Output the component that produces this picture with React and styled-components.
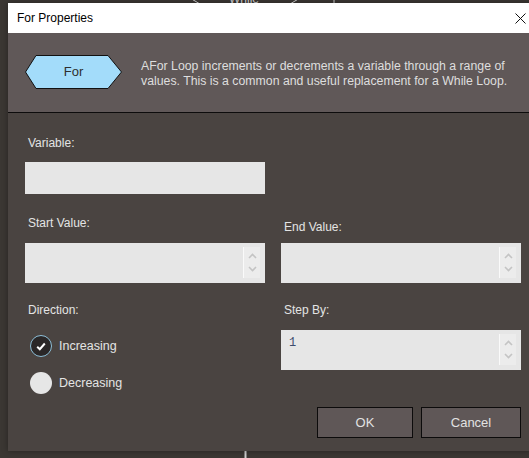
// IMPORTS
import React, { useState } from "react";
import styled, { createGlobalStyle } from "styled-components";

// GLOBAL
const GlobalStyle = createGlobalStyle`
  html, body {
    margin: 0;
    padding: 0;
    background: #3b3733;
    overflow: hidden;
  }
  * {
    box-sizing: border-box;
  }
`;

// STYLED COMPONENTS
const Canvas = styled.div`
  position: relative;
  width: 529px;
  height: 458px;
  overflow: hidden;
  background: #3b3733;
  font-family: "Liberation Sans", Arial, sans-serif;
`;

const FlowDrawing = styled.svg`
  position: absolute;
  left: 0;
  top: 0;
`;

const Window = styled.div`
  position: absolute;
  left: 8px;
  top: 3px;
  width: 524px;
  display: flex;
  flex-direction: column;
  box-shadow: 0 0 6px rgba(0, 0, 0, 0.35);
`;

const TitleBar = styled.div`
  height: 30px;
  background: #ffffff;
  display: flex;
  align-items: center;
  justify-content: space-between;
  padding: 0 6px 0 9px;
  font-size: 12px;
  color: #000;
`;

const CloseButton = styled.div`
  width: 12px;
  height: 12px;
  display: flex;
  align-items: center;
  justify-content: center;
  margin-top: 1px;
`;

const Header = styled.div`
  height: 80px;
  background: #605858;
  border-bottom: 1px solid #0d0c0c;
  display: flex;
  align-items: center;
  padding: 0 0 1px 17px;
  gap: 19px;
`;

const Shape = styled.div`
  position: relative;
  width: 97px;
  height: 34px;
  flex-shrink: 0;
  margin-top: -1px;

  span {
    position: absolute;
    inset: 0;
    display: flex;
    align-items: center;
    justify-content: center;
    font-size: 13px;
    color: #2e2e2e;
  }
`;

const Description = styled.p`
  margin: 4px 0 0 0;
  font-size: 12.3px;
  line-height: 15px;
  color: #dedede;
  white-space: nowrap;
`;

const Body = styled.div`
  height: 338px;
  background: #4a4441;
  padding: 23px 11px 0 17px;
  display: grid;
  grid-template-columns: 240px 240px;
  column-gap: 16px;
  align-content: start;
`;

const Field = styled.div`
  display: flex;
  flex-direction: column;
  justify-content: ${p => (p.start ? "flex-start" : "flex-end")};
  margin-top: ${p => p.top || 0}px;
`;

const Label = styled.div`
  font-size: 12px;
  line-height: 14px;
  color: #e4e4e4;
  padding-left: 3px;
  margin-bottom: ${p => p.gap || 12}px;
`;

const TextBox = styled.div`
  height: ${p => p.height || 32}px;
  background: #e6e6e6;
  display: flex;
  align-items: flex-start;
  justify-content: space-between;
  padding: 4px 5px 5px 8px;
`;

const Value = styled.span`
  font-family: "Liberation Mono", "DejaVu Sans Mono", monospace;
  font-size: 12px;
  line-height: 18px;
  color: #3d4d6e;
`;

const Spinner = styled.div`
  width: 17px;
  align-self: stretch;
  background: #ececec;
  border-left: 1px solid #fafafa;
  display: flex;
  flex-direction: column;
  align-items: center;
  justify-content: space-evenly;
`;

const Radios = styled.div`
  display: flex;
  flex-direction: column;
  gap: 15px;
  margin-top: 6px;
  padding-left: 5px;
`;

const RadioRow = styled.label`
  display: flex;
  align-items: center;
  gap: 7px;
  height: 22px;
  font-size: 12.5px;
  color: #e4e4e4;
  cursor: pointer;
`;

const RadioDot = styled.span`
  width: 22px;
  height: 22px;
  border-radius: 50%;
  background: ${p => (p.checked ? "#2a2727" : "#e6e6e6")};
  border: ${p => (p.checked ? "1.5px solid #8dbfd8" : "none")};
  display: flex;
  align-items: center;
  justify-content: center;
`;

const Actions = styled.div`
  grid-column: 1 / 3;
  display: flex;
  justify-content: flex-end;
  gap: 8px;
  margin-top: 13px;
`;

const Button = styled.button`
  width: ${p => p.width}px;
  height: 31px;
  background: #5f5757;
  border: 1px solid #0c0b0b;
  color: #e2e2e2;
  font-family: "Liberation Sans", Arial, sans-serif;
  font-size: 13px;
  padding: 0;
  cursor: pointer;
`;

// SMALL PARTS
const Arrows = () => (
  <Spinner>
    <svg width="9" height="6" viewBox="0 0 9 6">
      <path d="M1 5 L4.5 1.5 L8 5" fill="none" stroke="#c4c4c4" strokeWidth="1.6" />
    </svg>
    <svg width="9" height="6" viewBox="0 0 9 6">
      <path d="M1 1 L4.5 4.5 L8 1" fill="none" stroke="#c4c4c4" strokeWidth="1.6" />
    </svg>
  </Spinner>
);

const Check = () => (
  <svg width="10" height="9" viewBox="0 0 10 9">
    <path d="M1.2 4.8 L3.8 7.2 L8.8 1.5" fill="none" stroke="#fff" strokeWidth="2" />
  </svg>
);

// COMPONENT
export default function App() {
  const [direction, setDirection] = useState("inc");

  return (
    <Canvas>
      <GlobalStyle />
      <FlowDrawing width="529" height="458">
        <path d="M200 -20 L190 -2 L200 4 L290 4 L300 -2 L290 -20" fill="none" stroke="#cfcfcf" strokeWidth="1" />
        <text x="229" y="3" fontSize="12" fill="#d8d8d8" fontFamily="Liberation Sans">While</text>
        <line x1="334" y1="0" x2="334" y2="3" stroke="#cfcfcf" />
        <line x1="245.5" y1="450" x2="245.5" y2="458" stroke="#cfcfcf" strokeWidth="2" />
      </FlowDrawing>

      <Window>
        <TitleBar>
          <span>For Properties</span>
          <CloseButton>
            <svg width="11" height="11" viewBox="0 0 11 11">
              <path d="M0.5 0.5 L10.5 10.5 M10.5 0.5 L0.5 10.5" stroke="#111" strokeWidth="1" />
            </svg>
          </CloseButton>
        </TitleBar>

        <Header>
          <Shape>
            <svg width="97" height="34" viewBox="0 0 97 34">
              <polygon points="0.5,17 11,0.5 83,0.5 96.5,17 83,33.5 11,33.5" fill="#a3dcfa" stroke="#111" strokeWidth="1" />
            </svg>
            <span>For</span>
          </Shape>
          <Description>
            AFor Loop increments or decrements a variable through a range of
            <br />
            values. This is a common and useful replacement for a While Loop.
          </Description>
        </Header>

        <Body>
          <Field>
            <Label>Variable:</Label>
            <TextBox />
          </Field>
          <div />

          <Field top={22}>
            <Label gap={13}>Start Value:</Label>
            <TextBox height={40}>
              <span />
              <Arrows />
            </TextBox>
          </Field>
          <Field top={22}>
            <Label gap={9}>End Value:</Label>
            <TextBox height={40}>
              <span />
              <Arrows />
            </TextBox>
          </Field>

          <Field top={20} start>
            <Label gap={12}>Direction:</Label>
            <Radios>
              <RadioRow onClick={() => setDirection("inc")}>
                <RadioDot checked={direction === "inc"}>
                  {direction === "inc" && <Check />}
                </RadioDot>
                Increasing
              </RadioRow>
              <RadioRow onClick={() => setDirection("dec")}>
                <RadioDot checked={direction === "dec"}>
                  {direction === "dec" && <Check />}
                </RadioDot>
                Decreasing
              </RadioRow>
            </Radios>
          </Field>
          <Field top={20} start>
            <Label gap={13}>Step By:</Label>
            <TextBox height={40}>
              <Value>1</Value>
              <Arrows />
            </TextBox>
          </Field>

          <Actions>
            <Button width={96}>OK</Button>
            <Button width={100}>Cancel</Button>
          </Actions>
        </Body>
      </Window>
    </Canvas>
  );
}
